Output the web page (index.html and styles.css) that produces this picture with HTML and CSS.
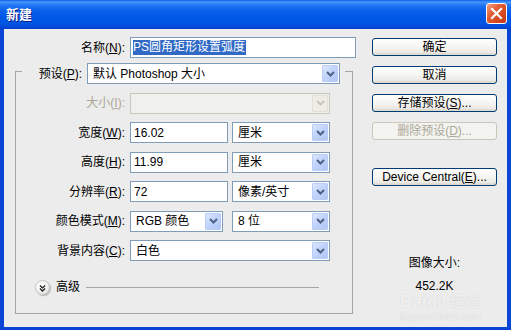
FILE: index.html
```html
<!DOCTYPE html>
<html lang="zh">
<head>
<meta charset="utf-8">
<title>新建</title>
<link rel="stylesheet" href="styles.css">
</head>
<body>
<div class="window">
  <div class="titlebar">
    <span class="title">新建</span>
    <div class="close">
      <svg width="13" height="13" viewBox="0 0 13 13"><path d="M2 2 L11 11 M11 2 L2 11" stroke="#fff" stroke-width="2.2" stroke-linecap="square"/></svg>
    </div>
  </div>
  <div class="client">
    <div class="main">
      <div class="row">
        <label class="lbl lbl-name">名称(<u>N</u>):</label>
        <div class="field input w226"><span class="selected">PS圆角矩形设置弧度</span></div>
      </div>
      <div class="group">
        <div class="legend">
          <label class="lbl lbl-legend">预设(<u>P</u>):</label>
          <div class="field select w253"><span class="txt">默认 Photoshop 大小</span><span class="arrow"><svg width="9" height="6" viewBox="0 0 9 6"><path d="M1 1 L4.5 4.5 L8 1" fill="none" stroke="#4D6185" stroke-width="2"/></svg></span></div>
        </div>
        <div class="row first disabled">
          <label class="lbl">大小(<u>I</u>):</label>
          <div class="field select w200 off"><span class="txt"></span><span class="arrow"><svg width="9" height="6" viewBox="0 0 9 6"><path d="M1 1 L4.5 4.5 L8 1" fill="none" stroke="#C9C7BA" stroke-width="2"/></svg></span></div>
        </div>
        <div class="row next">
          <label class="lbl">宽度(<u>W</u>):</label>
          <div class="field input w98"><span class="val">16.02</span></div>
          <div class="field select w98 gap4"><span class="txt">厘米</span><span class="arrow"><svg width="9" height="6" viewBox="0 0 9 6"><path d="M1 1 L4.5 4.5 L8 1" fill="none" stroke="#4D6185" stroke-width="2"/></svg></span></div>
        </div>
        <div class="row next">
          <label class="lbl">高度(<u>H</u>):</label>
          <div class="field input w98"><span class="val">11.99</span></div>
          <div class="field select w98 gap4"><span class="txt">厘米</span><span class="arrow"><svg width="9" height="6" viewBox="0 0 9 6"><path d="M1 1 L4.5 4.5 L8 1" fill="none" stroke="#4D6185" stroke-width="2"/></svg></span></div>
        </div>
        <div class="row next">
          <label class="lbl">分辨率(<u>R</u>):</label>
          <div class="field input w98"><span class="val">72</span></div>
          <div class="field select w98 gap4"><span class="txt">像素/英寸</span><span class="arrow"><svg width="9" height="6" viewBox="0 0 9 6"><path d="M1 1 L4.5 4.5 L8 1" fill="none" stroke="#4D6185" stroke-width="2"/></svg></span></div>
        </div>
        <div class="row next">
          <label class="lbl">颜色模式(<u>M</u>):</label>
          <div class="field select w93"><span class="txt">RGB 颜色</span><span class="arrow"><svg width="9" height="6" viewBox="0 0 9 6"><path d="M1 1 L4.5 4.5 L8 1" fill="none" stroke="#4D6185" stroke-width="2"/></svg></span></div>
          <div class="field select w98 gap9"><span class="txt">8 位</span><span class="arrow"><svg width="9" height="6" viewBox="0 0 9 6"><path d="M1 1 L4.5 4.5 L8 1" fill="none" stroke="#4D6185" stroke-width="2"/></svg></span></div>
        </div>
        <div class="row next">
          <label class="lbl">背景内容(<u>C</u>):</label>
          <div class="field select w200"><span class="txt">白色</span><span class="arrow"><svg width="9" height="6" viewBox="0 0 9 6"><path d="M1 1 L4.5 4.5 L8 1" fill="none" stroke="#4D6185" stroke-width="2"/></svg></span></div>
        </div>
        <div class="adv">
          <span class="toggle"><svg width="15" height="15" viewBox="0 0 15 15"><path d="M4.5 4 L7.5 6.8 L10.5 4 M4.5 7.6 L7.5 10.4 L10.5 7.6" fill="none" stroke="#1E1E1E" stroke-width="1.5"/></svg></span>
          <span class="adv-text">高级</span>
          <span class="adv-line"></span>
        </div>
      </div>
    </div>
    <div class="side">
      <div class="btn">确定</div>
      <div class="btn">取消</div>
      <div class="btn">存储预设(<u>S</u>)...</div>
      <div class="btn btn-off">删除预设(<u>D</u>)...</div>
      <div class="btn btn-dc">Device Central(<u>E</u>)...</div>
      <div class="info">图像大小:</div>
      <div class="info info-val">452.2K</div>
    </div>
  </div>
  <div class="watermark">
    <div class="wm-top"><span class="wm-bai">Bai</span><span class="wm-paw">du</span><span class="wm-jy">经验</span></div>
    <div class="wm-url">jingyan.baidu.com</div>
  </div>
</div>
</body>
</html>
```

FILE: styles.css
```css
body {
  margin: 0;
  background: #ffffff;
  font-family: "Liberation Sans", "Noto Sans CJK SC", sans-serif;
  font-size: 12px;
  line-height: 14px;
  color: #000;
}

.window {
  width: 511px;
  height: 330px;
  position: relative;
}

.titlebar {
  height: 29px;
  box-sizing: border-box;
  display: flex;
  justify-content: space-between;
  align-items: flex-start;
  padding: 3px 4px 0 6px;
  background: linear-gradient(to bottom,
    #0A5FE8 0px, #4A98FA 2px, #2278F4 5px, #0D62EB 10px,
    #0058E6 16px, #0055E3 24px, #0049D8 27px, #003FCB 29px);
}

.title {
  color: #fff;
  font-family: "Noto Sans CJK SC", sans-serif;
  font-weight: bold;
  font-size: 13px;
  line-height: 21px;
  text-shadow: 1px 1px 0 #0F1E89;
}

.close {
  width: 21px;
  height: 21px;
  box-sizing: border-box;
  border: 1px solid #fff;
  border-radius: 3px;
  background: linear-gradient(135deg, #F2A386 0%, #E4613A 35%, #D84A22 65%, #C23A18 100%);
  display: flex;
  align-items: center;
  justify-content: center;
}

.client {
  height: 301px;
  box-sizing: border-box;
  border-style: solid;
  border-color: #0B45D6;
  border-width: 0 4px 3px 4px;
  background: #ECECEC;
  display: flex;
  padding: 8px 0 0 11px;
}

.main {
  width: 341px;
}

.row {
  display: flex;
  align-items: center;
  height: 21px;
}

.lbl {
  width: 109px;
  margin-right: 5px;
  text-align: right;
  white-space: nowrap;
}

.lbl-name {
  width: 110px;
}

.lbl-legend {
  width: 60px;
}

.field {
  box-sizing: border-box;
  height: 21px;
  border: 1px solid #7F9DB9;
  background: #fff;
  display: flex;
  align-items: center;
}

.input {
  padding-left: 2px;
}

.val {
  padding-left: 1px;
}

.selected {
  background: #316AC5;
  color: #fff;
  line-height: 15px;
  padding: 0 1px 0 0;
}

.select {
  padding-left: 5px;
}

.select .txt {
  flex: 1;
  white-space: nowrap;
  overflow: hidden;
}

.arrow {
  box-sizing: border-box;
  width: 16px;
  height: 17px;
  margin: 1px;
  border: 1px solid #B9CCF5;
  border-radius: 1px;
  background: linear-gradient(135deg, #DDE8FE 0%, #C3D4FB 45%, #AFC6F6 100%);
  display: flex;
  align-items: center;
  justify-content: center;
}

.off {
  background: #F0F0EC;
  border-color: #C9C7BA;
}

.off .arrow {
  background: #EEEDE5;
  border-color: #E2E1D8;
}

.disabled .lbl {
  color: #ACA899;
}

.w226 { width: 226px; }
.w253 { width: 253px; }
.w200 { width: 200px; }
.w98 { width: 98px; }
.w93 { width: 93px; }
.gap4 { margin-left: 4px; }
.gap9 { margin-left: 9px; }

.group {
  box-sizing: border-box;
  width: 338px;
  height: 243px;
  margin-top: 13px;
  border: 1px solid #A6A69E;
}

.legend {
  margin: -9px 0 0 6px;
  width: 323px;
  height: 21px;
  background: #ECECEC;
  display: flex;
  align-items: center;
}

.row.first {
  margin-top: 8.5px;
}

.row.next {
  margin-top: 8.5px;
}

.adv {
  display: flex;
  align-items: center;
  height: 15px;
  margin: 18.5px 33px 0 19px;
}

.toggle {
  width: 15px;
  height: 15px;
  border-radius: 50%;
  box-sizing: border-box;
  border: 1px solid #C4C4BE;
  background: radial-gradient(circle at 40% 35%, #ffffff 0%, #F4F4F2 50%, #D6D6D0 100%);
  box-shadow: 1px 1px 1px rgba(0, 0, 0, 0.25);
  display: flex;
}

.adv-text {
  margin-left: 6px;
}

.adv-line {
  flex: 1;
  height: 1px;
  background: #A6A69E;
  margin-left: 6px;
}

.side {
  width: 125px;
  margin-left: 16px;
  padding-top: 1px;
  display: flex;
  flex-direction: column;
}

.btn {
  box-sizing: border-box;
  height: 18px;
  border: 1px solid #003C74;
  border-radius: 3px;
  background: linear-gradient(to bottom, #FFFFFF 0%, #F6F6F3 45%, #ECEBE6 80%, #D8D5CC 100%);
  display: flex;
  align-items: center;
  justify-content: center;
  margin-bottom: 10px;
  white-space: nowrap;
}

.btn-off {
  border-color: #C9C7BA;
  background: #F3F3EF;
  color: #ACA899;
}

.btn-dc {
  margin-top: 18px;
}

.info {
  text-align: center;
  margin-top: 60px;
}

.info-val {
  margin-top: 9px;
}

.watermark {
  position: absolute;
  left: 400px;
  top: 293px;
  color: rgba(255, 255, 255, 0.75);
  text-shadow: 0 0 1px rgba(120, 120, 120, 0.35);
  font-family: "Liberation Sans", "Noto Sans CJK SC", sans-serif;
}

.wm-top {
  display: flex;
  align-items: baseline;
  line-height: 17px;
}

.wm-bai {
  font-size: 17px;
  font-weight: bold;
}

.wm-paw {
  font-size: 15px;
  font-weight: bold;
  margin-left: 1px;
}

.wm-jy {
  font-size: 15px;
  margin-left: 4px;
}

.wm-url {
  font-size: 10px;
  line-height: 11px;
  margin-top: 1px;
}
```
